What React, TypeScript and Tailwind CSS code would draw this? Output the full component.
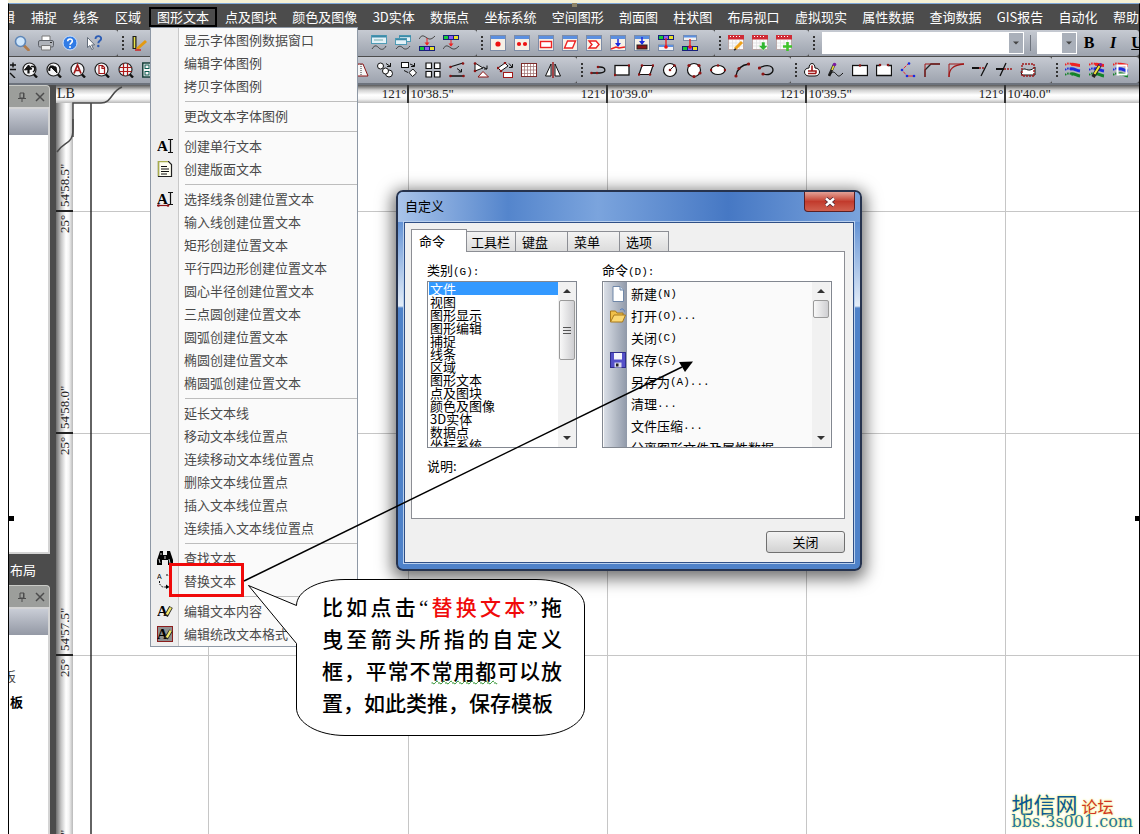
import React, { useState } from 'react'

type IconProps = { children: React.ReactNode; box?: string }

function Icon({ children, box = '0 0 16 16' }: IconProps) {
  return (
    <svg viewBox={box} className="h-4 w-4 shrink-0" fill="none" stroke="#111" strokeWidth="1" aria-hidden="true">
      {children}
    </svg>
  )
}

// small window frame shared by the "insert shape" tools
function Frame({ children }: { children?: React.ReactNode }) {
  return (
    <Icon>
      <rect x="0.5" y="0.5" width="15" height="15" fill="#f6f0e6" stroke="#7d8ca6" />
      <rect x="1" y="1" width="14" height="3" fill="#5b8fe0" stroke="none" />
      {children}
    </Icon>
  )
}

function Lens({ children }: { children?: React.ReactNode }) {
  return (
    <Icon>
      <path d="M11 11.5 L15 15.5" strokeWidth="2.4" />
      <circle cx="7.5" cy="7.5" r="6.5" fill="#f4f4f6" stroke="#222" strokeWidth="1.2" />
      {children}
    </Icon>
  )
}

function Calendar({ children }: { children?: React.ReactNode }) {
  return (
    <Icon>
      <rect x="0.5" y="1" width="15" height="13.5" fill="#fbfbfb" stroke="#b9a9a9" />
      <rect x="0" y="0" width="16" height="4.5" fill="#cf2a35" stroke="none" />
      <path d="M2 1.5h12" stroke="#fff" strokeDasharray="1 2" />
      <path d="M4.5 5v9M8 5v9M11.5 5v9M1 8h14M1 11h14" stroke="#ddd" strokeWidth="0.7" />
      {children}
    </Icon>
  )
}

function Bars() {
  return (
    <g strokeWidth="3">
      <path d="M6 2.500c3-1 5 1 9 1" stroke="#ef2222" />
      <path d="M5 7c4-1 6 1.500 10 2" stroke="#1d2ce0" />
      <path d="M6 12c3-1 5 1.500 9 2" stroke="#128328" />
      <path d="M0 3c3-2.500 6-1.500 8 0" stroke="#ef2222" strokeDasharray="1.500 1" strokeWidth="2" />
      <path d="M0 8c3-2.500 5-1.500 7 0" stroke="#1d2ce0" strokeDasharray="1.500 1" strokeWidth="2" />
      <path d="M0 13c3-2.500 6-1.500 8 0" stroke="#128328" strokeDasharray="1.500 1" strokeWidth="2" />
    </g>
  )
}

const Dots = ({ at, r = 1.3, color = '#8c1414' }: { at: [number, number][]; r?: number; color?: string }) => (
  <g fill={color} stroke="none">
    {at.map(([x, y]) => <circle key={`${x}-${y}`} cx={x} cy={y} r={r} />)}
  </g>
)

const colorBar = (y: number) => (
  <g stroke="none">
    <rect x="0" y={y} width="16" height="5" fill="#17207a" />
    <rect x="1" y={y + 1} width="4" height="3" fill="#19c93a" />
    <rect x="6" y={y + 1} width="4" height="3" fill="#8a5cf0" />
    <rect x="11" y={y + 1} width="4" height="3" fill="#e8e12a" />
  </g>
)

const fileTools = [
  { name: '查看', icon: <Icon><path d="M10 10.5l4.5 4.5" stroke="#b07a4a" strokeWidth="2.6" strokeLinecap="round" /><circle cx="6.5" cy="6.5" r="5" fill="#cfe6fb" stroke="#5d86b8" strokeWidth="1.6" /></Icon> },
  { name: '打印', icon: <Icon><path d="M4 6V1h8v5" fill="#fff" stroke="#777" /><rect x="0.5" y="5.5" width="15" height="6.5" rx="1.5" fill="#aeb2b9" stroke="#5d6168" /><path d="M3.5 10.5h9v4.5h-9z" fill="#eee" stroke="#777" /><path d="M12 7.5h2" stroke="#333" /></Icon> },
  { name: '帮助', icon: <Icon><circle cx="8" cy="8" r="7" fill="#2f7be6" stroke="#cfe1fa" /><path d="M5.7 6.3c0-3.2 4.8-3 4.6-.2-.1 1.7-2.2 1.7-2.2 3.6" stroke="#fff" strokeWidth="1.6" /><circle cx="8" cy="12" r="1" fill="#fff" stroke="none" /></Icon> },
  { name: '这是什么', icon: <Icon><path d="M1.5 2.5v10l2.5-2 1.8 4 1.6-.8-1.8-3.8h3z" fill="#fff" stroke="#55606e" strokeWidth="0.9" /><path d="M9.5 4c0-4 6-3.6 5.6-.2-.2 2-2.8 2-2.8 4.4" stroke="#2c5cb4" strokeWidth="1.9" /><circle cx="12.3" cy="11" r="1.2" fill="#2c5cb4" stroke="none" /></Icon> },
]

const brushTool = { name: '画笔', icon: <Icon><path d="M3.5 1v13" strokeWidth="4" stroke="#1c1c1c" /><path d="M3.5 2v11" strokeWidth="1.6" stroke="#e9e34a" /><path d="M6 14l9-8" stroke="#e39a12" strokeWidth="3" /><path d="M4 15h6" stroke="#c22" strokeWidth="1.5" /></Icon> }

const layerTools = [
  { name: '线注记', icon: <Icon><rect x="0.5" y="0.5" width="15" height="8" fill="#e4f2f8" stroke="#4f9bb5" /><path d="M1 1.5h14" stroke="#3c8aa8" strokeWidth="2" /><path d="M3 5h9" stroke="#7aa" /><path d="M1 14c3-5 5-3 7-1s5 2 7-2" stroke="#444" /></Icon> },
  { name: '多线注记', icon: <Icon><rect x="4.5" y="0.5" width="11" height="6" fill="#e4f2f8" stroke="#4f9bb5" /><rect x="0.5" y="3.5" width="11" height="6" fill="#e4f2f8" stroke="#4f9bb5" /><path d="M4 1.5h12M1 4.5h10" stroke="#3c8aa8" strokeWidth="1.6" /><path d="M1 14c3-4 5-3 7-1s5 1 7-2" stroke="#444" /></Icon> },
  { name: '线转图块', icon: <Icon><path d="M0 4c3-5 5-3 8-1s5 1 8-2" stroke="#444" />{colorBar(11)}<path d="M8 3v7" stroke="#e22" /><path d="M5.5 7.5h5l-2.500 3z" fill="#e22" stroke="none" /></Icon> },
  { name: '图块转线', icon: <Icon>{colorBar(0)}<path d="M0 14c3-5 5-3 8-1s5 1 8-2" stroke="#444" /><path d="M8 5v6" stroke="#e22" /><path d="M5.500 8.500h5l-2.500 3z" fill="#e22" stroke="none" /></Icon> },
]

const insertTools = [
  { name: '插入点', icon: <Frame><Dots at={[[8, 9]]} r={2.6} color="#e11" /></Frame> },
  { name: '插入多点', icon: <Frame><Dots at={[[5, 9], [11, 9]]} r={2.100} color="#e11" /></Frame> },
  { name: '插入矩形', icon: <Frame><rect x="2.500" y="6.500" width="11" height="6" fill="#fff" stroke="#e22" strokeWidth="1.400" /></Frame> },
  { name: '插入平行四边形', icon: <Frame><path d="M5.500 6h8l-3 7h-8z" fill="#fff" stroke="#e22" strokeWidth="1.400" /></Frame> },
  { name: '插入多边形', icon: <Frame><path d="M3 6h7l3 3.500-3 3.500H3l3-3.500z" fill="#fff" stroke="#e22" strokeWidth="1.400" /></Frame> },
  { name: '插入到线', icon: <Frame><path d="M1 14l5-2 3 1 6-1" stroke="#e22" strokeWidth="1.400" /><path d="M8 4v7" stroke="#1a2be0" strokeWidth="1.500" /><path d="M5 8h6l-3 4z" fill="#1a2be0" stroke="none" /></Frame> },
  { name: '插入到块', icon: <Frame><rect x="3" y="10" width="10" height="4" fill="#8c1414" stroke="#222" /><path d="M8 2v6" stroke="#1a2be0" strokeWidth="1.500" /><path d="M5 6h6l-3 4z" fill="#1a2be0" stroke="none" /></Frame> },
  { name: '图块到窗口', icon: <Icon>{colorBar(0)}<rect x="0.500" y="10" width="15" height="5.500" fill="#f2f2f2" stroke="#7d8ca6" /><path d="M1 11h14" stroke="#5b8fe0" strokeWidth="2" /><path d="M8 3v9" stroke="#e22" strokeWidth="1.400" /><Dots at={[[8, 12]]} r={1.800} color="#e11" /></Icon> },
  { name: '窗口到图块', icon: <Icon><rect x="1.500" y="0.500" width="13" height="5" fill="#f2f2f2" stroke="#7d8ca6" /><path d="M2 1.500h12" stroke="#5b8fe0" strokeWidth="2" />{colorBar(11)}<path d="M8 4v8" stroke="#e22" strokeWidth="1.400" /><Dots at={[[8, 12]]} r={1.800} color="#e11" /></Icon> },
]

const tableTools = [
  { name: '编辑表', icon: <Calendar><path d="M7 14l7-7" stroke="#f0a21a" strokeWidth="3" /><path d="M6 15l2-1" stroke="#333" strokeWidth="1.500" /></Calendar> },
  { name: '导出表', icon: <Calendar><path d="M9.500 7h3.500v3.500h3l-4.800 5-4.700-5h3z" fill="#2fb52f" stroke="#fff" strokeWidth="0.500" /></Calendar> },
  { name: '新增表', icon: <Calendar><path d="M11.500 7v9M7 11.500h9" stroke="#3fc42a" strokeWidth="2.600" /></Calendar> },
]

const zoomTools = [
  { name: '前一视图', icon: <Lens><path d="M6.500 11.500V5" strokeWidth="2.200" /><path d="M2.500 8l4-5 3.500 4z" fill="#111" /><path d="M9 4.500h3c1.500 2 1 4-1 5.500" strokeWidth="1.500" /></Lens> },
  { name: '后一视图', icon: <Lens><path d="M4 4l6 1 1 6z" fill="#111" /><path d="M3.500 9c-1-3 1-5 4-4.500" strokeWidth="2" /></Lens> },
  { name: '全图', icon: <Lens><path d="M4 11.500l3.500-8.500 3.500 8.500M5.500 8.500h4" stroke="#a01818" strokeWidth="1.700" /></Lens> },
  { name: '图幅', icon: <Lens><path d="M5 3.500h3.500l2 2v6H5zM8 4v2.500h2.500" fill="#fff" stroke="#a01818" strokeWidth="1.200" /></Lens> },
  { name: '格网', icon: <Lens><path d="M5.500 1.500v12M9.500 1.500v12M1.500 5.500h12M1.500 9.500h12" stroke="#b01818" strokeWidth="1.200" /></Lens> },
  { name: '总览', icon: <Icon><rect x="0.800" y="1" width="13" height="14" fill="#f6f6f6" stroke="#153f3a" strokeWidth="1.500" /><rect x="3" y="3" width="4" height="3.500" stroke="#0a5a50" /><rect x="3" y="9.500" width="4" height="3.500" stroke="#0a5a50" /></Icon> },
]

const modifyTools = [
  { name: '梯形', icon: <Icon><path d="M1 14l4-12h5l5 12z" fill="#f7f7f7" stroke="#8c1414" /><path d="M8 2v12" stroke="#333" strokeDasharray="1 1" /></Icon> },
  { name: '复制圆', icon: <Icon><circle cx="3.500" cy="4" r="3" fill="#fff" /><circle cx="12" cy="11.500" r="3.500" fill="#fff" /><circle cx="8.500" cy="9" r="3" fill="#fff" /><path d="M9 1.500l4.500 3M13.500 1v3.500H10" /></Icon> },
  { name: '复制矩形', icon: <Icon><rect x="0.500" y="0.500" width="7" height="5" fill="#fff" /><path d="M8 10.500l4-3.500 3.500 4-4 3.500z" fill="#fff" /><path d="M3 8.500l4 2M9 2l4.500 2M13.500 1v3.500H10" /></Icon> },
  { name: '阵列', icon: <Icon><path d="M1 1h5.500v5.500H1zM9.500 1H15v5.500H9.500zM1 9.500h5.500V15H1zM9.500 9.500H15V15H9.500z" fill="#fff" strokeWidth="1.200" /></Icon> },
  { name: '移动线', icon: <Icon><path d="M1 5l13-4M1 14h14" strokeWidth="1.300" /><path d="M8 6.500l4 3M12.500 7v3H9.500" /><Dots at={[[1.500, 5], [14, 1.500], [1.500, 14], [14.500, 14]]} /></Icon> },
  { name: '旋转三角', icon: <Icon><path d="M2 1v8l8-3z" fill="#fff" /><path d="M5 15l5-5.500 5.500 5.500z" fill="#fff" stroke="#8c1414" /><path d="M10 5l4 2M14 3.500v3.500h-3" /><Dots at={[[2, 1.500], [2, 9]]} /></Icon> },
  { name: '旋转矩形', icon: <Icon><path d="M1 6l7-5 3 3-7 5z" fill="#fff" /><rect x="6.500" y="10.500" width="9" height="5" fill="#fff" stroke="#a01818" /><path d="M12 1.500l3 3.500M15.500 2v3.500H12" /><Dots at={[[1, 6], [8, 1], [4, 9]]} /></Icon> },
  { name: '格网裁剪', icon: <Icon><rect x="0.500" y="1.500" width="15" height="13" fill="#fff" stroke="#7b2a2a" /><path d="M3.500 2v12M6.500 2v12M9.500 2v12M12.500 2v12M1 4.500h14M1 8h14M1 11.500h14" stroke="#9b6a6a" strokeWidth="0.700" /></Icon> },
  { name: '镜像', icon: <Icon><path d="M6 2v12H0.500z" fill="#fff" /><path d="M10 2v12h5.500z" fill="#fff" /><path d="M8 0v16" stroke="#a01818" strokeWidth="1.400" /></Icon> },
]

const drawTools = [
  { name: '折线', icon: <Icon><path d="M1 11h9c7 0 6-6 0-6H7" strokeWidth="1.300" /><Dots at={[[1.500, 11], [7, 11], [8, 5]]} /></Icon> },
  { name: '矩形', icon: <Icon><rect x="1" y="3.500" width="14" height="9.500" fill="#fff" strokeWidth="1.300" /><Dots at={[[15, 3.500], [1, 13]]} /></Icon> },
  { name: '平行四边形', icon: <Icon><path d="M4 3.500h11l-3 9H1z" fill="#fff" strokeWidth="1.200" /><Dots at={[[4, 3.500], [15, 3.500], [12, 12.500], [1, 12.500]]} /></Icon> },
  { name: '圆', icon: <Icon><circle cx="8" cy="8" r="6.500" fill="#fff" strokeWidth="1.200" /><path d="M8 8l4.500-4.500" /><Dots at={[[8, 8], [12.500, 3.500]]} /></Icon> },
  { name: '三点圆', icon: <Icon><circle cx="8" cy="8" r="6.500" fill="#fff" strokeWidth="1.200" /><Dots at={[[3, 3.500], [13, 3.500], [14, 11], [8, 14.500]]} r={1.600} /></Icon> },
  { name: '椭圆', icon: <Icon><ellipse cx="8" cy="8" rx="7" ry="4.500" fill="#fff" strokeWidth="1.200" /><Dots at={[[1, 8], [15, 8], [8, 3.500]]} /></Icon> },
  { name: '圆弧', icon: <Icon><path d="M2 14C3 7 7 3 15 2" strokeWidth="1.300" /><Dots at={[[2, 14], [5, 6.500], [14.500, 2]]} r={1.600} /></Icon> },
  { name: '椭圆弧', icon: <Icon><path d="M1 6c10-5 14-1 14 2s-4 6-10 4" strokeWidth="1.300" /><Dots at={[[1.500, 6], [5, 12]]} r={1.600} /></Icon> },
]

const editTools = [
  { name: '缓冲区', icon: <Icon><path d="M5 6c0-6 6-6 6 0 6 0 6 8 0 8H5c-6 0-6-8 0-8z" fill="#fff" /><path d="M8 3.500v5M4 11.500h8M4 9h8v2.500" stroke="#a01818" strokeWidth="1.600" /></Icon> },
  { name: '自由线', icon: <Icon><path d="M1 14l5-11" stroke="#222" strokeWidth="2.800" /><path d="M4 8l2-5" stroke="#eedf3a" strokeWidth="1.600" /><circle cx="6.500" cy="2.500" r="1.800" fill="#7b1ca0" stroke="none" /><path d="M1 14c4-7 6-3 8-1s3 1 6-2" /></Icon> },
  { name: '闭合', icon: <Icon><rect x="0.500" y="3.500" width="15" height="10" fill="#fff" strokeWidth="1.300" /><Dots at={[[8, 3.500]]} /></Icon> },
  { name: '断开', icon: <Icon><path d="M4 3.500H0.500v10h15v-10H12" fill="#fff" strokeWidth="1.300" /><Dots at={[[4, 3], [12, 3]]} /></Icon> },
  { name: '节点', icon: <Icon><path d="M9 1L2 8l5 6" stroke="#e23" strokeDasharray="3 1" /><path d="M7 14h8" stroke="#e23" /><Dots at={[[9, 1.500], [2, 8], [7, 14], [14, 14]]} color="#1a2be0" /></Icon> },
  { name: '倒角', icon: <Icon><path d="M1 15V8l6-6h9" strokeWidth="1.300" stroke="#222" /><path d="M1 15V2h15" stroke="#a01818" /></Icon> },
  { name: '圆角', icon: <Icon><path d="M1 15c0-8 4-12 15-13" strokeWidth="1.300" stroke="#a01818" /><path d="M1 15V2h15" stroke="#a01818" /></Icon> },
  { name: '延伸', icon: <Icon><path d="M0 6h7" strokeWidth="2" /><path d="M7 6h5" stroke="#a01818" strokeDasharray="2 1" strokeWidth="1.500" /><path d="M15.500 1L9 14" strokeWidth="1.300" /></Icon> },
  { name: '修剪', icon: <Icon><path d="M0 7h8" strokeWidth="2" /><path d="M8 7h8" stroke="#a01818" strokeDasharray="2 1" strokeWidth="1.500" /><path d="M10 1L4 14" strokeWidth="1.300" /></Icon> },
  { name: '平滑', icon: <Icon><path d="M1 10c4-8 6 3 14-5v8H2z" fill="#fff" /><rect x="2" y="2" width="12" height="12" stroke="#a01818" strokeDasharray="2 1" strokeWidth="1.400" /></Icon> },
]

const styleTools = [
  { name: '图层', icon: <Icon><Bars /></Icon> },
  { name: '编辑图层', icon: <Icon><Bars /><path d="M4 15l7-12" stroke="#222" strokeWidth="3.600" /><path d="M5.500 12l5-8" stroke="#efe23a" strokeWidth="2" /><circle cx="11.500" cy="2.500" r="1.600" fill="#7b1ca0" stroke="none" /></Icon> },
  { name: '图层窗口', icon: <Icon><Bars /><rect x="4.500" y="3.500" width="9" height="9" stroke="#fff" strokeWidth="2" /></Icon> },
]

const menusBefore = ['捕捉', '线条', '区域']
const menusAfter = ['点及图块', '颜色及图像', '3D实体', '数据点', '坐标系统', '空间图形', '剖面图', '柱状图', '布局视口', '虚拟现实', '属性数据', '查询数据', 'GIS报告', '自动化', '帮助']

const textA = (
  <text x="0" y="13" fontFamily="Liberation Serif, serif" fontWeight="700" fontSize="15" fill="#000" stroke="none">A</text>
)

const menuIcons: Record<string, React.ReactNode> = {
  创建单行文本: <Icon>{textA}<path d="M11 1.500h5M11 14.500h5M13.500 2v12" strokeWidth="1.200" /></Icon>,
  创建版面文本: <Icon><path d="M1.500 0.500h10l3 3v12h-13z" fill="#fffff2" stroke="#222" strokeWidth="1.200" /><path d="M1.500 15V0.500H11" stroke="#a8ad4c" strokeWidth="1.400" /><path d="M4 5.500h6M4 8h8M4 10.500h8M4 13h6" strokeWidth="1.200" /></Icon>,
  选择线条创建位置文本: <Icon>{textA}<path d="M11 1.500h5M11 13.500h5M13.500 2v12" strokeWidth="1.200" /><path d="M0 14.500h12" stroke="#8c1414" strokeWidth="1.200" /><Dots at={[[1.500, 14.500], [11, 14.500]]} /></Icon>,
  查找文本: <Icon><path d="M3 1h3v4h4V1h3l3 9v5h-5v-5H5v5H0v-5z" fill="#000" stroke="none" /><path d="M2 9l1 4M12 9l1 4M4 3v2M8 6v3" stroke="#fff" strokeWidth="0.800" /></Icon>,
  替换文本: <Icon><text x="0" y="6" fontFamily="Liberation Sans, sans-serif" fontSize="7" fill="#000" stroke="none">A</text><path d="M2.500 8v3l3 3h4M9 2h3l2 3v3" strokeDasharray="2 1" /><path d="M9 11.500l3.500 2.500L9 16z" fill="#000" stroke="none" /></Icon>,
  编辑文本内容: <Icon>{textA}<path d="M9 13l5-9" stroke="#222" strokeWidth="4" /><path d="M9.800 11.500l4-7" stroke="#f2e86a" strokeWidth="2.400" /></Icon>,
  编辑统改文本格式: <Icon><rect x="0.500" y="0.500" width="15" height="15" fill="#8f8f8f" stroke="#8c1d1d" />{textA}<path d="M9 12.500l5-8" stroke="#222" strokeWidth="4" /><path d="M9.800 11.500l4-7" stroke="#f2e86a" strokeWidth="2.400" /></Icon>,
}

const menuGroups = [
  ['显示字体图例数据窗口', '编辑字体图例', '拷贝字体图例'],
  ['更改文本字体图例'],
  ['创建单行文本', '创建版面文本'],
  ['选择线条创建位置文本', '输入线创建位置文本', '矩形创建位置文本', '平行四边形创建位置文本', '圆心半径创建位置文本', '三点圆创建位置文本', '圆弧创建位置文本', '椭圆创建位置文本', '椭圆弧创建位置文本'],
  ['延长文本线', '移动文本线位置点', '连续移动文本线位置点', '删除文本线位置点', '插入文本线位置点', '连续插入文本线位置点'],
  ['查找文本', '替换文本'],
  ['编辑文本内容', '编辑统改文本格式'],
]

const categories = ['文件', '视图', '图形显示', '图形编辑', '捕捉', '线条', '区域', '图形文本', '点及图块', '颜色及图像', '3D实体', '数据点', '坐标系统']

const commands = [
  { label: '新建', key: '(N)', icon: <Icon><path d="M3 0.500h7l3.500 3.500v11.500H3z" fill="#fff" stroke="#6f87a8" /><path d="M10 0.500V4h3.500" fill="#cfdcec" stroke="#6f87a8" /></Icon> },
  { label: '打开', key: '(O)...', icon: <Icon><path d="M0.500 14V3h5l1.500 2h6v3" fill="#f0c04a" stroke="#a8781a" /><path d="M0.500 14l3.500-7h11.500l-3 7z" fill="#fbd873" stroke="#a8781a" /><path d="M10 2c2-2 4-1 4.500 1.500" stroke="#4a78c0" /></Icon> },
  { label: '关闭', key: '(C)' },
  { label: '保存', key: '(S)', icon: <Icon><rect x="0.500" y="0.500" width="15" height="15" fill="#5450c8" stroke="#2f2c8c" /><rect x="4" y="1" width="8" height="6.500" fill="#f4f4fb" stroke="none" /><rect x="4.500" y="10.500" width="7" height="5" fill="#d8d8ea" stroke="none" /><rect x="6" y="11.500" width="2.500" height="3" fill="#222" stroke="none" /></Icon> },
  { label: '另存为', key: '(A)...' },
  { label: '清理', key: '...' },
  { label: '文件压缩', key: '...' },
  { label: '分离图形文件及属性数据', key: '' },
]

const tabs = [
  { name: '工具栏', size: 'w-[49px] pl-1' },
  { name: '键盘', size: 'w-[52px] pl-1.5' },
  { name: '菜单', size: 'w-[52px] pl-1.5' },
  { name: '选项', size: 'w-[49px] pl-1.5' },
]

const eastings = ['38.5', '39.0', '39.5', '40.0']
const northings = ["54'58.5\"", "54'58.0\"", "54'57.5\"", "54'57.0\""]

type Tool = { name: string; icon: React.ReactNode }

function Tools({ items }: { items: Tool[] }) {
  return (
    <>
      {items.map((tool) => (
        <button key={tool.name} aria-label={tool.name} className="flex h-5 w-6 shrink-0 items-center justify-center">
          {tool.icon}
        </button>
      ))}
    </>
  )
}

function Strip({ size, grip = true, children }: { size: string; grip?: boolean; children: React.ReactNode }) {
  return (
    <div className={`flex h-[26px] items-center rounded-r-[3px] bg-linear-to-b from-[#c6cad2] to-[#9da3ae] ${size}`}>
      {grip && (
        <span className="mr-0.5 ml-1 flex w-[3px] shrink-0 flex-col gap-0.5">
          <i className="h-0.5 w-0.5 bg-[#333]" />
          <i className="h-0.5 w-0.5 bg-[#333]" />
          <i className="h-0.5 w-0.5 bg-[#333]" />
          <i className="h-0.5 w-0.5 bg-[#333]" />
        </span>
      )}
      {children}
    </div>
  )
}

function PanelHeader() {
  return (
    <div className="flex h-[22px] items-center justify-end gap-2 rounded-tr-sm border-t border-r border-[#c9cac6] bg-[#9c9e9b] pr-1">
      <button aria-label="固定">
        <svg viewBox="0 0 10 10" className="h-2.5 w-2.5" fill="none" stroke="#4c4c4c"><path d="M3 1h4v5H3zM6.500 1v5M1 6.500h8M5 7v3" /></svg>
      </button>
      <button aria-label="关闭面板">
        <svg viewBox="0 0 10 10" className="h-2.5 w-2.5" fill="none" stroke="#4c4c4c" strokeWidth="1.500"><path d="M1 1l8 8M9 1l-8 8" /></svg>
      </button>
    </div>
  )
}

function ScrollBar({ thumb, grooves }: { thumb: string; grooves?: boolean }) {
  return (
    <div className="flex w-[18px] shrink-0 flex-col items-center bg-[#f1f1f1]">
      <button aria-label="向上" className="flex h-[18px] items-center justify-center">
        <svg viewBox="0 0 8 4" className="h-1 w-2"><path d="M0 4L4 0l4 4z" fill="#333" /></svg>
      </button>
      <div className={`flex w-4 flex-col items-center justify-center gap-0.5 rounded-xs border border-[#9a9a9a] bg-linear-to-r from-[#f8f8f8] to-[#cfcfd2] ${thumb}`}>
        {grooves && [0, 1, 2].map((n) => <i key={n} className="h-px w-2 bg-[#555]" />)}
      </div>
      <button aria-label="向下" className="mt-auto flex h-[18px] items-center justify-center">
        <svg viewBox="0 0 8 4" className="h-1 w-2"><path d="M0 0l4 4 4-4z" fill="#333" /></svg>
      </button>
    </div>
  )
}

function TextMenu() {
  return (
    <div role="menu" className="absolute top-5 left-px z-10 w-[208px] border border-[#8e98a5] bg-[linear-gradient(to_right,#eeeeee_27px,#c8c8c8_27px,#c8c8c8_28px,#fafafa_28px)] pt-px">
      {menuGroups.map((group, i) => (
        <React.Fragment key={group[0]}>
          {i > 0 && <div className="ml-[34px] flex h-[7px] items-center"><hr className="w-full border-[#bdbdbd]" /></div>}
          {group.map((label) => (
            <button key={label} role="menuitem" className="flex h-[23px] w-full items-center pl-1.5 text-[13px] text-[#4a4a4a]">
              <span className="w-[27px] shrink-0">{menuIcons[label]}</span>
              {label}
            </button>
          ))}
        </React.Fragment>
      ))}
    </div>
  )
}

function CustomizeDialog() {
  const [selected, setSelected] = useState('文件')

  return (
    <section role="dialog" aria-label="自定义" className="absolute top-[190px] left-[396px] z-20 w-[466px] rounded-[7px] border-2 border-[#26334e] bg-[linear-gradient(to_bottom,#5f8fd2_0px,#4a7cc8_20px,#6795d6_32px,#e4edf8_114px,#4f82c9_116px)] px-1.5 pb-1.5 text-[13px] text-black shadow-[0_4px_16px_4px_rgba(0,0,0,0.55)]">
      <header className="-mx-1.5 flex h-[30px] items-start justify-between rounded-t-[5px] bg-[linear-gradient(to_right,#a9c4ea_0px,#5485cc_110px,#7ba4dd_200px,#4678c4_330px,#7aa3dc_100%)] pr-[5px] pl-[7px]">
        <h2 className="flex h-7 items-center">自定义</h2>
        <button aria-label="关闭窗口" className="flex h-5 w-[51px] items-center justify-center rounded-b-[4px] border border-t-0 border-[#5a1f24] bg-linear-to-b from-[#e2a197] via-[#c23a2c] to-[#d0604f]">
          <svg viewBox="0 0 12 10" className="h-2.5 w-3" fill="none"><path d="M2 1.500l8 7M10 1.500l-8 7" stroke="#4d2430" strokeWidth="4" /><path d="M2 1.500l8 7M10 1.500l-8 7" stroke="#fff" strokeWidth="2.400" /></svg>
        </button>
      </header>
      <div className="border border-[#2f4f86] bg-[#f0f0f0] pt-1.5 pr-2 pb-[9px] pl-1.5 outline outline-[#b9d0ee]">
        <div role="tablist" className="flex items-end">
          <button role="tab" aria-selected="true" className="relative z-10 -mb-px h-[23px] w-14 border border-b-0 border-[#8c8e94] bg-white pl-[7px] text-left leading-5">命令</button>
          {tabs.map((tab) => (
            <button key={tab.name} role="tab" aria-selected="false" className={`h-5 border border-b-0 border-l-0 border-[#8c8e94] bg-linear-to-b from-[#f3f3f3] to-[#dcdcdc] text-left leading-5 ${tab.size}`}>
              {tab.name}
            </button>
          ))}
        </div>
        <div className="h-[268px] border border-[#8c8e94] bg-white pt-2 pr-3 pl-[15px]">
          <div className="flex justify-between">
            <div>
              <h3 id="cat" className="h-[21px] leading-5">类别<span className="font-['Liberation_Mono',monospace] text-[11px]">(G):</span></h3>
              <div className="flex h-[167px] w-[150px] overflow-hidden border border-[#828790] bg-white">
                <ul role="listbox" aria-labelledby="cat" className="grow pl-px">
                  {categories.map((c) => (
                    <li key={c} role="option" aria-selected={c === selected} onClick={() => setSelected(c)} className={`h-[13px] pl-px leading-[13px] ${c === selected ? 'bg-[#3399ff] text-white' : ''}`}>
                      {c}
                    </li>
                  ))}
                </ul>
                <ScrollBar thumb="h-[60px]" grooves />
              </div>
            </div>
            <div>
              <h3 id="cmd" className="h-[21px] leading-5">命令<span className="font-['Liberation_Mono',monospace] text-[11px]">(D):</span></h3>
              <div className="flex h-[167px] w-[230px] overflow-hidden border border-[#828790] bg-[#fafafa] px-px">
                <ul aria-labelledby="cmd" className="grow bg-[linear-gradient(to_right,#d9dee6_0px,#8f98a8_23px,#fafafa_23px)] pt-px">
                  {commands.map((c) => (
                    <li key={c.label} className="flex h-[22px] items-center pl-1.5">
                      <span className="w-[21px] shrink-0">{c.icon}</span>
                      {c.label}<span className="font-['Liberation_Mono',monospace] text-[11px]">{c.key}</span>
                    </li>
                  ))}
                </ul>
                <ScrollBar thumb="h-[18px]" />
              </div>
            </div>
          </div>
          <p className="mt-2 leading-5">说明:</p>
        </div>
        <div className="mt-3 flex justify-end">
          <button className="h-[22px] w-[79px] rounded-[3px] border border-[#707070] bg-linear-to-b from-[#f3f3f3] to-[#d2d2d2] leading-5">关闭</button>
        </div>
      </div>
    </section>
  )
}

function Callout() {
  return (
    <>
      {/* pointer from the menu entry to the command list, plus the speech bubble */}
      <svg className="pointer-events-none absolute top-0 left-0 z-30" width="700" height="745" fill="none" aria-hidden="true">
        <rect x="170.500" y="564.500" width="72" height="31" stroke="#f00a0a" strokeWidth="3" />
        <path d="M244 581L682 367" stroke="#000" strokeWidth="1.500" />
        <path d="M693 361.500l-14 .5 6 10z" fill="#000" />
        <path d="M296.500 605.500L248.500 585.500L296.500 643.500V708C296.500 723 318 735.500 345 735.500H536C563 735.500 584.500 723 584.500 708V606C584.500 591 563 579.500 536 579.500H345C318 579.500 296.500 591 296.500 605.500z" fill="#fff" stroke="#000" />
      </svg>
      <div className="absolute top-[592px] left-[322px] z-40 w-60 font-['Liberation_Serif','Noto_Sans_CJK_SC',serif] text-[21px] leading-8 font-medium text-black">
        <p className="[text-align-last:justify]">比如点击“<span className="text-[#f00a0a]">替换文本</span>”拖</p>
        <p className="[text-align-last:justify]">曳至箭头所指的自定义</p>
        <p className="[text-align-last:justify]">框，平常不<span className="underline decoration-[#1e8a1e] decoration-wavy decoration-1">常用都</span>可以放</p>
        <p>置，如此类推，保存模板</p>
      </div>
    </>
  )
}

export default function App() {
  return (
    <div className="relative flex h-screen flex-col overflow-hidden bg-white pl-2 font-['Noto_Sans_CJK_SC',sans-serif] text-[13px]">
      <div className="h-[3px] shrink-0 bg-[#f5f0d4]" />
      <div className="flex min-h-0 grow flex-col border-x border-t border-x-black border-t-[#7fa8d8] bg-[#4c4c4c]">
        <nav className="flex h-[25px] shrink-0 items-center text-white">
          <button className="flex h-5 w-3.5 shrink-0 items-center justify-end overflow-hidden pr-2">辑</button>
          {menusBefore.map((m) => <button key={m} className="h-5 shrink-0 px-2 leading-5">{m}</button>)}
          <div className="relative shrink-0">
            <button aria-haspopup="menu" aria-expanded="true" className="block h-5 border-2 border-black px-1.5 leading-4">图形文本</button>
            <TextMenu />
          </div>
          <div className="ml-2 flex grow justify-between whitespace-nowrap">
            {menusAfter.map((m) => <button key={m} className="h-5 shrink-0 leading-5">{m}</button>)}
          </div>
        </nav>

        <div className="mt-px flex shrink-0">
          <Strip grip={false} size="w-[109px] shrink-0 pl-px"><Tools items={fileTools} /></Strip>
          <Strip size="w-[359px] shrink-0 pr-3.5">
            <Tools items={[brushTool]} />
            <div className="ml-auto flex"><Tools items={layerTools} /></div>
          </Strip>
          <Strip size="w-[238px] shrink-0"><Tools items={insertTools} /></Strip>
          <Strip size="w-[94px] shrink-0"><Tools items={tableTools} /></Strip>
          <Strip size="min-w-0 grow overflow-hidden">
            <select aria-label="字体" className="ml-1 h-[22px] w-[186px] shrink-0 appearance-none bg-white" />
            <span className="flex h-[22px] w-4 shrink-0 items-center justify-center border border-white bg-[#aab0ba]"><svg viewBox="0 0 6 3" className="h-1 w-1.5"><path d="M0 0h6L3 3z" fill="#444" /></svg></span>
            <span className="mx-1.5 h-4 w-px shrink-0 bg-[#6d737d]" />
            <select aria-label="字号" className="h-[22px] w-6 shrink-0 appearance-none bg-white" />
            <span className="flex h-[22px] w-4 shrink-0 items-center justify-center border border-white bg-[#aab0ba]"><svg viewBox="0 0 6 3" className="h-1 w-1.5"><path d="M0 0h6L3 3z" fill="#444" /></svg></span>
            <div className="flex font-['Liberation_Serif',serif] text-base font-bold text-black">
              <button className="w-6 shrink-0">B</button>
              <button className="w-6 shrink-0 italic">I</button>
              <button className="w-6 shrink-0 underline">U</button>
            </div>
          </Strip>
        </div>

        <div className="mt-px flex shrink-0 border-b-2 border-[#6c727c]">
          <Strip grip={false} size="w-[568px] shrink-0 pr-3">
            <span className="w-[9px] shrink-0 overflow-hidden"><Icon box="8 0 16 16"><path d="M9 3h6M12 0.500v5M9 7.500h6M9 11l5 5" strokeWidth="1.400" /></Icon></span>
            <Tools items={zoomTools} />
            <div className="ml-auto flex"><Tools items={modifyTools} /></div>
          </Strip>
          <Strip size="w-[214px] shrink-0"><Tools items={drawTools} /></Strip>
          <Strip size="w-[261px] shrink-0"><Tools items={editTools} /></Strip>
          <Strip size="grow"><Tools items={styleTools} /></Strip>
        </div>

        <main className="flex min-h-0 grow">
          <aside className="flex w-[41px] shrink-0 flex-col">
            <PanelHeader />
            <div className="flex h-[447px] shrink-0 flex-col border-y-2 border-r-2 border-[#d4d4d4] bg-white">
              <div className="h-[26px] bg-linear-to-b from-[#c9cdd6] to-[#9499a5]" />
            </div>
            <button className="h-[31px] shrink-0 pl-px text-left leading-6 text-white">布局</button>
            <PanelHeader />
            <div className="flex min-h-0 grow flex-col overflow-hidden border-t-2 border-r-2 border-[#d4d4d4] bg-white">
              <div className="h-[26px] shrink-0 bg-linear-to-b from-[#c9cdd6] to-[#9499a5]" />
              <p className="mt-7 flex h-[26px] w-[7px] items-center justify-end overflow-hidden text-[#444]">板</p>
              <p className="flex h-[26px] items-center pl-px font-bold">板</p>
            </div>
          </aside>

          <div className="flex min-h-0 min-w-0 grow flex-col pl-1.5">
            {/* easting ruler */}
            <div className="flex h-[18px] shrink-0 overflow-hidden bg-[linear-gradient(to_bottom,#5a5a5a,#d0d0d0_5px,#ffffff_10px,#f4f4f4_14px,#b8b8b8)] font-['Liberation_Serif',serif] text-[#222]">
              <div className="w-[253px] shrink-0 pl-px text-sm leading-[18px]">LB</div>
              {eastings.map((sec) => (
                <div key={sec} className="grid w-[199px] shrink-0 grid-cols-2 leading-[18px]">
                  <span className="border-r-2 border-[#333] text-right">121°</span>
                  <span className="pl-0.5">10'{sec}"</span>
                </div>
              ))}
            </div>
            <div className="flex min-h-0 grow">
              {/* northing ruler */}
              <div className="w-[17px] shrink-0 overflow-hidden bg-[linear-gradient(to_right,#6e6e6e,#c4c4c4_5px,#ffffff_10px,#f4f4f4_13px,#b8b8b8)] font-['Liberation_Serif',serif] text-[#222]">
                {northings.map((n) => (
                  <div key={n} className="flex h-[222px] w-[17px] rotate-180 leading-[17px] [writing-mode:vertical-rl] first:-mt-0.5">
                    <span className="h-1/2 pb-[3px] text-right">25°</span>
                    <span className="h-1/2 border-t-2 border-[#222] pt-[3px]">{n}</span>
                  </div>
                ))}
              </div>
              <div className="relative grow overflow-hidden bg-white">
                <svg className="absolute inset-0 h-full w-full" stroke="#c6c6c6" aria-hidden="true">
                  <path d="M135.500 0V2000M335.500 0V2000M534.500 0V2000M733.500 0V2000M932.500 0V2000M0 108.500H4000M0 330.500H4000M0 552.500H4000" />
                  <path d="M18 0V2000" stroke="#222" strokeWidth="1.400" />
                </svg>
              </div>
            </div>
          </div>
        </main>
      </div>

      {/* folded page corner where both rulers meet */}
      <svg className="absolute top-[85px] left-[56px]" width="70" height="70" fill="none" stroke="#4a4a4a" strokeWidth="1.500" aria-hidden="true">
        <path d="M17 52V18H45C56 18 55 6 66 2" fill="none" />
        <path d="M17 34V44C17 60 8 56 1 67" />
      </svg>
      <CustomizeDialog />
      <Callout />
      <i className="absolute top-[516px] left-[9px] h-[5px] w-[5px] bg-black" />
      <i className="absolute top-[516px] right-0 h-[5px] w-[5px] bg-black" />
      <i className="absolute top-[3px] left-[572px] h-1 w-[5px] bg-[#8d8468]" />
      <footer className="absolute right-[7px] bottom-1 z-10 leading-4 [text-shadow:0_0_2px_#f4f08a,0_0_3px_#f4f08a]">
        <a href="#forum" className="block text-[22px] text-[#0b5a94]">
          地信网<span className="ml-1 text-[16px] text-[#d03322]">论坛</span>
        </a>
        <a href="#home" className="block font-['DejaVu_Serif',serif] text-[16px] text-[#2377a0]">bbs.3s001.com</a>
      </footer>
    </div>
  )
}
